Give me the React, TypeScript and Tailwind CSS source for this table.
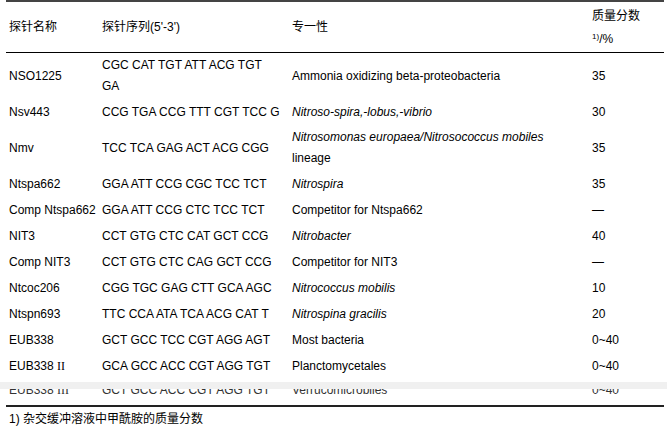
import React from "react";

type Row = {
  name: React.ReactNode;
  seq: string[];
  spec: React.ReactNode;
  val: string;
};

const I = ({ children }: { children: React.ReactNode }) => <span className="italic">{children}</span>;
const R = ({ children }: { children: React.ReactNode }) => (
  <span style={{ fontFamily: '"Liberation Serif", serif' }}>{children}</span>
);

const rows: Row[] = [
  { name: "NSO1225", seq: ["CGC CAT TGT ATT ACG TGT", "GA"], spec: "Ammonia oxidizing beta-proteobacteria", val: "35" },
  { name: "Nsv443", seq: ["CCG TGA CCG TTT CGT TCC G"], spec: <I>Nitroso-spira,-lobus,-vibrio</I>, val: "30" },
  {
    name: "Nmv",
    seq: ["TCC TCA GAG ACT ACG CGG"],
    spec: (
      <>
        <I>Nitrosomonas europaea/Nitrosococcus mobiles</I>
        <br />
        lineage
      </>
    ),
    val: "35",
  },
  { name: "Ntspa662", seq: ["GGA ATT CCG CGC TCC TCT"], spec: <I>Nitrospira</I>, val: "35" },
  { name: "Comp Ntspa662", seq: ["GGA ATT CCG CTC TCC TCT"], spec: "Competitor for Ntspa662", val: "—" },
  { name: "NIT3", seq: ["CCT GTG CTC CAT GCT CCG"], spec: <I>Nitrobacter</I>, val: "40" },
  { name: "Comp NIT3", seq: ["CCT GTG CTC CAG GCT CCG"], spec: "Competitor for NIT3", val: "—" },
  { name: "Ntcoc206", seq: ["CGG TGC GAG CTT GCA AGC"], spec: <I>Nitrococcus mobilis</I>, val: "10" },
  { name: "Ntspn693", seq: ["TTC CCA ATA TCA ACG CAT T"], spec: <I>Nitrospina gracilis</I>, val: "20" },
  { name: "EUB338", seq: ["GCT GCC TCC CGT AGG AGT"], spec: "Most bacteria", val: "0~40" },
  { name: <>EUB338 <R>II</R></>, seq: ["GCA GCC ACC CGT AGG TGT"], spec: "Planctomycetales", val: "0~40" },
];

const grid = "grid grid-cols-[93px_190px_300px_1fr]";

function DataRow({ r, multi }: { r: Row; multi: boolean }) {
  return (
    <div className={`${grid} ${multi ? "py-[2px]" : "h-[26px]"} items-center leading-[21px]`}>
      <div className="pl-[3px] whitespace-nowrap">{r.name}</div>
      <div className="pl-[3px] whitespace-nowrap">
        {r.seq.map((s, i) => (
          <div key={i}>{s}</div>
        ))}
      </div>
      <div className="pl-[3px] whitespace-nowrap">{r.spec}</div>
      <div className="pl-[3px] whitespace-nowrap">{r.val}</div>
    </div>
  );
}

export default function App() {
  return (
    <div
      className="w-[667px] h-[434px] bg-white text-black text-[12px] overflow-hidden"
      style={{ fontFamily: '"Liberation Sans", Arial, "Noto Sans CJK SC", sans-serif' }}
    >
      <div className="ml-[6px] w-[658px]">
        <div className="h-[2px] bg-[#444]" />
        <div className={`${grid} h-[50px] items-center`}>
          <div className="pl-[3px]">探针名称</div>
          <div className="pl-[3px]">探针序列(5'-3')</div>
          <div className="pl-[3px]">专一性</div>
          <div className="pl-[3px] leading-[23px] pt-[1px]">
            <div>质量分数</div>
            <div>
              <sup className="text-[8px]">1)</sup>/%
            </div>
          </div>
        </div>
        <div className="h-px bg-black" />
        {rows.map((r, i) => (
          <DataRow key={i} r={r} multi={r.seq.length > 1 || i === 2} />
        ))}
      </div>
      <div className="h-[3px]" />
      <div className="h-[7px] bg-[#f0f0f0]" />
      <div className="ml-[6px] w-[658px] h-[16px] overflow-hidden">
        <div className={`${grid} h-[22px] items-center leading-[22px] -mt-[10px] text-[#333]`}>
          <div className="pl-[3px] whitespace-nowrap">
            EUB338 <R>III</R>
          </div>
          <div className="pl-[3px] whitespace-nowrap">GCT GCC ACC CGT AGG TGT</div>
          <div className="pl-[3px] whitespace-nowrap">Verrucomicrobiles</div>
          <div className="pl-[3px] whitespace-nowrap">0~40</div>
        </div>
      </div>
      <div className="ml-[6px] w-[658px] h-[2px] bg-[#222]" />
      <div className="pl-[9px] pt-[3px] leading-[18px]">1) 杂交缓冲溶液中甲酰胺的质量分数</div>
    </div>
  );
}
